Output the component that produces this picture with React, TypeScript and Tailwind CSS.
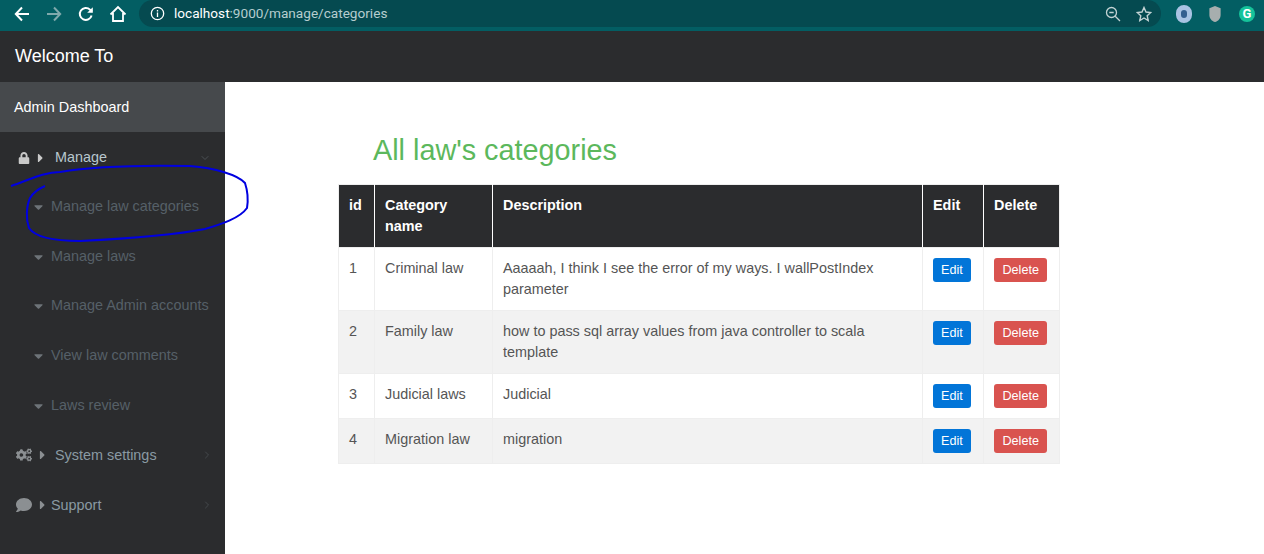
import { ChevronDown, ChevronRight } from 'lucide-react';
import { FaCaretDown, FaCaretRight, FaCogs, FaComment, FaLock } from 'react-icons/fa';

const subItems = ['Manage law categories', 'Manage laws', 'Manage Admin accounts', 'View law comments', 'Laws review'];

const rows = [
  { id: 1, name: 'Criminal law', description: 'Aaaaah, I think I see the error of my ways. I wallPostIndex parameter' },
  { id: 2, name: 'Family law', description: 'how to pass sql array values from java controller to scala template' },
  { id: 3, name: 'Judicial laws', description: 'Judicial' },
  { id: 4, name: 'Migration law', description: 'migration' },
];

const BrowserBar = () => (
  <div className="flex h-[31px] items-center bg-[#035e63] pb-[4px] text-white">
    <div className="flex items-center pl-[14px]">
      <svg className="h-4 w-4" viewBox="0 0 16 16" fill="none" stroke="#fff" strokeWidth="2">
        <path d="M15 8H2M8 1.5 1.8 8 8 14.5" />
      </svg>
      <svg className="ml-[16px] h-4 w-4" viewBox="0 0 16 16" fill="none" stroke="#7fa9ac" strokeWidth="2">
        <path d="M1 8h13M8 1.5 14.2 8 8 14.5" />
      </svg>
      <svg className="ml-[16px] h-4 w-4" viewBox="0 0 16 16" fill="none" stroke="#fff" strokeWidth="2">
        <path d="M13.6 9.5A6 6 0 1 1 12 3.6L14 5.5" />
        <path d="M14.8 1.2v5.6H9.2" fill="#fff" stroke="none" />
      </svg>
      <svg className="ml-[15px] h-[18px] w-[18px]" viewBox="0 0 18 18" fill="none" stroke="#fff" strokeWidth="1.8">
        <path d="M1.5 9.5 9 2l7.5 7.5M4 8v8h10V8" />
      </svg>
    </div>
    <div className="ml-[12px] flex h-[27px] w-[1022px] items-center rounded-[14px] bg-[#054a50] pl-[11px] font-['Roboto',sans-serif] text-[13.6px]">
      <svg className="h-[15px] w-[15px]" viewBox="0 0 16 16" fill="none" stroke="#fff" strokeWidth="1.4">
        <circle cx="8" cy="8" r="6.6" />
        <path d="M8 7v4.6M8 4.2v1.6" />
      </svg>
      <span className="ml-[9px]">localhost</span>
      <span className="text-[#b5cdcf]">:9000/manage/categories</span>
      <div className="ml-auto flex items-center pr-[9px]">
        <svg className="h-4 w-4" viewBox="0 0 16 16" fill="none" stroke="#c3d3d4" strokeWidth="1.3">
          <circle cx="6.5" cy="6.5" r="5" />
          <path d="M4.3 6.5h4.4M10.2 10.2 15 15" />
        </svg>
        <svg className="ml-[15px] h-4 w-4" viewBox="0 0 16 16" fill="none" stroke="#c3d3d4" strokeWidth="1.4">
          <path d="M8 1.5 10 6l4.8.5-3.6 3.2 1 4.8L8 12l-4.2 2.5 1-4.8L1.2 6.5 6 6z" />
        </svg>
      </div>
    </div>
    <div className="ml-[15px] h-[18px] w-4 rounded-full border-[5px] border-[#a9c3e3] bg-[#345f8f]" />
    <svg className="ml-[14px] h-[18px] w-[18px]" viewBox="0 0 16 16" fill="#a7aeae">
      <path d="M8 .8 13 2.8v6c0 3.2-2.2 5.4-5 6.4-2.8-1-5-3.2-5-6.4v-6z" />
    </svg>
    <div className="ml-[15px] flex h-4 w-4 items-center justify-center rounded-full bg-[#15c39a] font-['Roboto',sans-serif] text-[13px] font-bold leading-none">
      G
    </div>
  </div>
);

const Sidebar = () => (
  <aside className="flex w-[225px] shrink-0 flex-col bg-[#2b2c2e] text-[14.4px]">
    <div className="flex h-[50px] items-center bg-[#46494c] pl-[14px] pt-px text-white">Admin Dashboard</div>
    <div className="flex h-[50px] items-center pt-px text-[#b8c7ce]">
      <FaLock className="ml-[18px] h-3 w-3 text-[#c9c9c9]" />
      <FaCaretRight className="ml-[6px] h-[14px] w-[9px] text-[#c9c9c9]" />
      <span className="ml-[10px]">Manage</span>
      <ChevronDown className="ml-auto mr-[14px] h-3 w-3 text-[#4b5054]" />
    </div>
    {subItems.map((item) => (
      <div key={item} className="flex h-[49.7px] items-center text-[#566068]">
        <FaCaretDown className="ml-[33px] h-[14px] w-[11px] text-[#6d7378]" />
        <span className="ml-[7px]">{item}</span>
      </div>
    ))}
    <div className="flex h-[50px] items-center text-[#8a9aa3]">
      <FaCogs className="ml-4 h-4 w-4 text-[#8b8f92]" />
      <FaCaretRight className="ml-[6px] h-[14px] w-[9px] text-[#8b8f92]" />
      <span className="ml-[8px]">System settings</span>
      <ChevronRight className="ml-auto mr-[12px] h-3 w-3 text-[#44484b]" />
    </div>
    <div className="flex h-[50px] items-center text-[#8a9aa3]">
      <FaComment className="ml-4 h-4 w-4 text-[#8b8f92]" />
      <FaCaretRight className="ml-[6px] h-[14px] w-[9px] text-[#8b8f92]" />
      <span className="ml-[4px]">Support</span>
      <ChevronRight className="ml-auto mr-[12px] h-3 w-3 text-[#44484b]" />
    </div>
  </aside>
);

const LawTable = () => (
  <table className="w-[722px] table-fixed border-collapse text-[14.4px] leading-[21px] text-[#555555]">
    <thead>
      <tr className="bg-[#2b2c2e] align-top font-bold text-white">
        <th className="w-[36px] border border-[#eeeeee] border-r-white p-[10px] text-left">id</th>
        <th className="w-[118px] border border-[#eeeeee] border-r-white p-[10px] text-left">Category name</th>
        <th className="w-[430px] border border-[#eeeeee] border-r-white p-[10px] text-left">Description</th>
        <th className="w-[61px] border border-[#eeeeee] border-r-white p-[10px] text-left">Edit</th>
        <th className="border border-[#eeeeee] p-[10px] text-left">Delete</th>
      </tr>
    </thead>
    <tbody>
      {rows.map((row) => (
        <tr key={row.id} className="align-top even:bg-[#f2f2f2]">
          <td className="border border-[#eeeeee] p-[10px]">{row.id}</td>
          <td className="border border-[#eeeeee] p-[10px]">{row.name}</td>
          <td className="border border-[#eeeeee] p-[10px]">{row.description}</td>
          <td className="border border-[#eeeeee] p-[10px]">
            <button className="block h-6 rounded-[3px] bg-[#0275d8] px-[8px] text-[12.6px] leading-6 text-white">Edit</button>
          </td>
          <td className="border border-[#eeeeee] p-[10px]">
            <button className="block h-6 rounded-[3px] bg-[#d9534f] px-[8.5px] text-[12.6px] leading-6 text-white">Delete</button>
          </td>
        </tr>
      ))}
    </tbody>
  </table>
);

export default function App() {
  return (
    <div className="relative flex h-[554px] w-[1264px] flex-col overflow-hidden bg-white font-['Liberation_Sans',Arial,sans-serif]">
      <BrowserBar />
      <header className="flex h-[51px] items-center bg-[#2b2c2e] pl-[15px] text-[18px] text-white">Welcome To</header>
      <div className="flex min-h-0 flex-1">
        <Sidebar />
        <main className="pl-[113px] pt-[50px]">
          <h1 className="mb-[15px] pl-[35px] text-[28.8px] leading-[37px] text-[#5cb85c]">All law's categories</h1>
          <LawTable />
        </main>
      </div>
      {/* hand-drawn annotation over the sidebar */}
      <svg className="absolute left-0 top-0 h-[554px] w-[1264px]" viewBox="0 0 1264 554" fill="none" stroke="#0000e0" strokeWidth="2" pointerEvents="none">
        <path d="M11 186C27 181 43 172 60 172C95 166 140 165 190 166C215 168 238 175 245 183C248 192 248 202 247 208C240 218 222 224 205 229C170 236 120 239 80 241C55 241 35 237 29 228C26 220 26 207 30 198C33 193 38 189 45 186" />
      </svg>
    </div>
  );
}
